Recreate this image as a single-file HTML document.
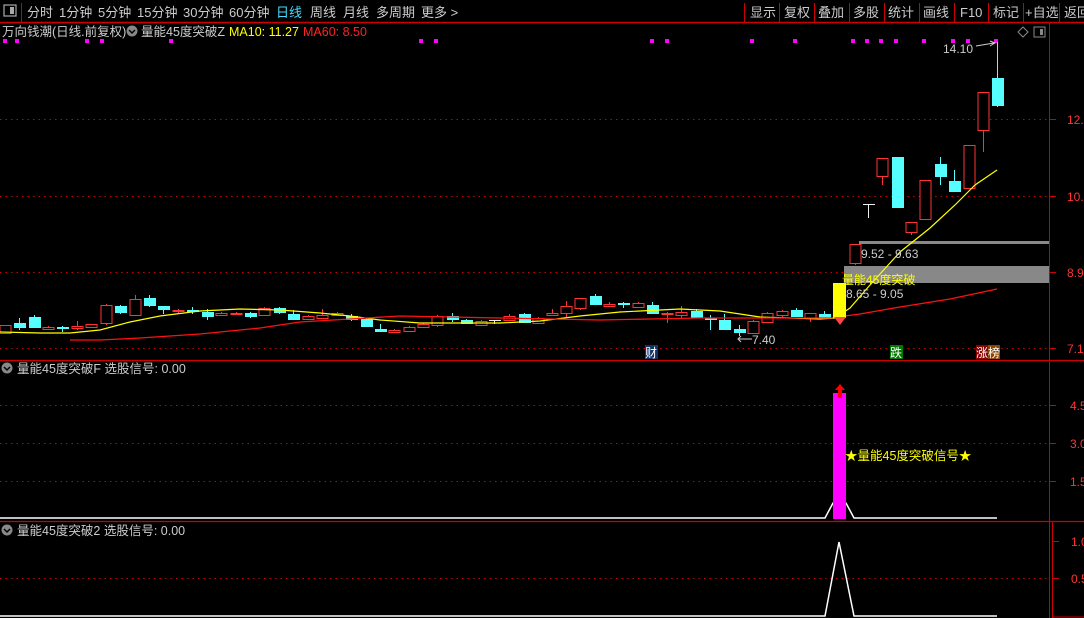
<!DOCTYPE html>
<html><head><meta charset="utf-8"><style>
body{margin:0;background:#000;width:1084px;height:618px;overflow:hidden;font-family:"Liberation Sans","Noto Sans CJK SC",sans-serif}
svg{position:absolute;left:0;top:0}
text{font-family:"Liberation Sans","Noto Sans CJK SC",sans-serif}
</style></head><body>
<svg id="s" width="1084" height="618" viewBox="0 0 1084 618" xmlns="http://www.w3.org/2000/svg">
<rect width="1084" height="618" fill="#000"/>
<!-- top bar -->
<line x1="0" y1="22.5" x2="1084" y2="22.5" stroke="#c00" stroke-width="1.5"/>
<rect x="4" y="5" width="12" height="11" fill="none" stroke="#aaa" stroke-width="1.2"/><rect x="10" y="7" width="4" height="7" fill="#aaa"/>
<line x1="21.5" y1="3" x2="21.5" y2="22" stroke="#c00"/>
<g font-size="13" fill="#ccc">
<text x="27" y="17">分时</text><text x="59" y="17">1分钟</text><text x="98" y="17">5分钟</text><text x="137" y="17">15分钟</text><text x="183" y="17">30分钟</text><text x="229" y="17">60分钟</text>
<text x="276" y="17" fill="#4df">日线</text><text x="310" y="17">周线</text><text x="343" y="17">月线</text><text x="376" y="17">多周期</text><text x="421" y="17">更多 &gt;</text>
<text x="750" y="17">显示</text><text x="784" y="17">复权</text><text x="818" y="17">叠加</text><text x="853" y="17">多股</text><text x="888" y="17">统计</text><text x="923" y="17">画线</text><text x="960" y="17">F10</text><text x="993" y="17">标记</text><text x="1025" y="17">+自选</text><text x="1064" y="17">返回</text>
</g>
<g stroke="#c00"><line x1="744.5" y1="3" x2="744.5" y2="22"/><line x1="779.5" y1="3" x2="779.5" y2="22"/><line x1="814.5" y1="3" x2="814.5" y2="22"/><line x1="849.5" y1="3" x2="849.5" y2="22"/><line x1="884.5" y1="3" x2="884.5" y2="22"/><line x1="919.5" y1="3" x2="919.5" y2="22"/><line x1="954.5" y1="3" x2="954.5" y2="22"/><line x1="988.5" y1="3" x2="988.5" y2="22"/><line x1="1023.5" y1="3" x2="1023.5" y2="22"/><line x1="1059.5" y1="3" x2="1059.5" y2="22"/></g>
<!-- header main -->
<g font-size="12.5">
<text x="2" y="36" fill="#ccc">万向钱潮(日线.前复权)</text>
<circle cx="132" cy="31" r="5.5" fill="#888"/><path d="M129 30 L132 33 L135 30" stroke="#000" stroke-width="1.5" fill="none"/>
<text x="141" y="36" fill="#ccc">量能45度突破Z</text>
<text x="229" y="36" fill="#ff0">MA10: 11.27</text>
<text x="303" y="36" fill="#f22">MA60: 8.50</text>
</g>
<path d="M1023 27 L1028 32 L1023 37 L1018 32Z" fill="none" stroke="#888"/>
<rect x="1034" y="27" width="11" height="10" fill="none" stroke="#888"/><rect x="1040" y="29" width="3" height="6" fill="#888"/>
<!-- axes -->
<line x1="1049.5" y1="23" x2="1049.5" y2="618" stroke="#c00"/>
<line x1="0" y1="360.5" x2="1084" y2="360.5" stroke="#c00" stroke-width="1.3"/>
<line x1="0" y1="521.5" x2="1084" y2="521.5" stroke="#c00" stroke-width="1.3"/>
<line x1="1052.5" y1="522" x2="1052.5" y2="618" stroke="#c00"/>
<line x1="1052" y1="617" x2="1084" y2="617" stroke="#c00"/>
<g stroke="#c00" stroke-dasharray="1.5 4">
<line x1="0" y1="119.5" x2="1049" y2="119.5"/><line x1="0" y1="196.5" x2="1049" y2="196.5"/><line x1="0" y1="272.5" x2="1049" y2="272.5"/><line x1="0" y1="348.5" x2="1049" y2="348.5"/>
<line x1="0" y1="405.5" x2="1049" y2="405.5"/><line x1="0" y1="443.5" x2="1049" y2="443.5"/><line x1="0" y1="481.5" x2="1049" y2="481.5"/>
<line x1="0" y1="578.5" x2="1049" y2="578.5"/>
</g>
<g stroke="#c00"><line x1="1050" y1="119.5" x2="1056" y2="119.5"/><line x1="1050" y1="196.5" x2="1056" y2="196.5"/><line x1="1050" y1="272.5" x2="1056" y2="272.5"/><line x1="1050" y1="348.5" x2="1056" y2="348.5"/><line x1="1050" y1="405.5" x2="1056" y2="405.5"/><line x1="1050" y1="443.5" x2="1056" y2="443.5"/><line x1="1050" y1="481.5" x2="1056" y2="481.5"/><line x1="1053" y1="541.5" x2="1059" y2="541.5"/><line x1="1053" y1="578.5" x2="1059" y2="578.5"/></g>
<g font-size="12" fill="#f33">
<text x="1067" y="124">12.3</text><text x="1067" y="201">10.6</text><text x="1067" y="277">8.9</text><text x="1067" y="353">7.1</text>
<text x="1070" y="410">4.5</text><text x="1070" y="448">3.0</text><text x="1070" y="486">1.5</text>
<text x="1071" y="546">1.0</text><text x="1071" y="583">0.5</text>
</g>
<g id="dots" fill="#f0f"></g>
<!-- gray zones -->
<rect x="859" y="241" width="190" height="3" fill="#888"/>
<rect x="844" y="266" width="205" height="17" fill="#888"/>
<g id="c"></g>
<polyline id="ma10" fill="none" stroke="#ff0" stroke-width="1.2" points="0,332 40,333 70,333 100,330 130,322 160,316 200,311 240,309 280,310 320,313 350,316 380,320 420,323 470,323 500,323 540,321 580,316 620,312 680,309 720,311 760,317 790,318 820,319 835,318 850,308 870,285 900,252 930,228 955,205 975,185 997,170"/>
<polyline id="ma60" fill="none" stroke="#f11" stroke-width="1.3" points="70,340 100,340 140,338 200,334 260,328 300,322 350,319 400,316 500,318 600,320 650,319 700,318 800,318 830,318 860,314 900,307 950,299 997,289"/>
<rect x="833" y="283" width="13" height="35" fill="#ff0"/>
<path d="M834 317 L846 317 L840 325Z" fill="#f44"/>
<g font-size="12">
<text x="861" y="258" fill="#ccc">9.52 - 9.63</text>
<text x="842" y="284" fill="#ff0">量能45度突破</text>
<text x="846" y="298" fill="#ccc">8.65 - 9.05</text>
<text x="943" y="53" fill="#ccc">14.10</text>
<text x="752" y="344" fill="#ccc">7.40</text>
</g>
<path d="M976 46 L994 43 M990 41 L995 43 L990 46" stroke="#ccc" fill="none"/>
<path d="M738 339 L752 339 M741 336 L738 339 L741 342" stroke="#ccc" fill="none"/>
<rect x="645" y="345" width="13" height="14" fill="#136"/><text x="645" y="357" font-size="12" fill="#fff">财</text>
<rect x="890" y="345" width="13" height="14" fill="#070"/><text x="890" y="357" font-size="12" fill="#fff">跌</text>
<rect x="976" y="345" width="12" height="14" fill="#800"/><rect x="988" y="345" width="12" height="14" fill="#840"/><text x="976" y="357" font-size="12" fill="#fff">涨榜</text>
<!-- panel 2 -->
<circle cx="7" cy="368" r="5.5" fill="#888"/><path d="M4 367 L7 370 L10 367" stroke="#000" stroke-width="1.5" fill="none"/>
<text x="17" y="373" font-size="12.5" fill="#ccc">量能45度突破F  选股信号: 0.00</text>
<polyline fill="none" stroke="#fff" stroke-width="1.5" points="0,518 825,518 833,503 846,503 854,518 997,518"/>
<rect x="833" y="393" width="13" height="126" fill="#f0f"/>
<path d="M840 384 L845 390 L842 390 L842 398 L838 398 L838 390 L835 390Z" fill="#f00"/>
<text x="845" y="460" font-size="12.5" fill="#ff0">★量能45度突破信号★</text>
<!-- panel 3 -->
<circle cx="7" cy="530" r="5.5" fill="#888"/><path d="M4 529 L7 532 L10 529" stroke="#000" stroke-width="1.5" fill="none"/>
<text x="17" y="535" font-size="12.5" fill="#ccc">量能45度突破2  选股信号: 0.00</text>
<polyline fill="none" stroke="#fff" stroke-width="1.5" points="0,616 825,616 839,542 854,616 997,616"/>
</svg>
<script>
var ns="http://www.w3.org/2000/svg",g=document.getElementById('c'),dg=document.getElementById('dots');
// x, top, bottom, wickTop, wickBottom, type(r=red hollow,c=cyan,w=white)
var d=[[5,325,333,325,333,'r'],[19,323,327,318,330,'c'],[34,317,327,315,328,'c'],[48,327,329,326,330,'r'],[62,327,328,326,332,'c'],[77,326,328,321,330,'r'],[91,324,327,324,328,'r'],[106,305,323,304,325,'r'],[120,306,312,305,314,'c'],[135,299,315,295,315,'r'],[149,298,305,295,307,'c'],[163,306,309,306,314,'c'],[178,310,311,309,313,'r'],[192,310,311,307,314,'c'],[207,312,316,309,320,'c'],[221,313,315,312,316,'r'],[236,313,314,312,315,'r'],[250,313,316,312,318,'c'],[264,308,315,307,316,'r'],[279,308,312,307,314,'c'],[293,314,319,310,320,'c'],[308,316,319,315,320,'r'],[322,315,318,309,318,'r'],[337,313,315,312,316,'r'],[351,316,319,314,321,'c'],[366,319,326,318,327,'c'],[380,329,331,324,332,'c'],[394,330,332,329,333,'r'],[409,327,331,326,332,'r'],[423,324,327,323,328,'r'],[437,316,325,315,327,'r'],[452,316,319,313,322,'c'],[466,320,323,319,324,'c'],[481,321,325,320,326,'r'],[494,320,321,320,324,'w'],[509,316,320,314,321,'r'],[524,314,322,313,322,'c'],[538,318,323,317,324,'r'],[552,313,315,309,316,'r'],[566,306,313,301,318,'r'],[580,298,308,298,310,'r'],[595,296,304,294,305,'c'],[609,304,306,302,307,'r'],[623,303,304,302,308,'c'],[638,303,307,302,308,'r'],[652,305,313,302,314,'c'],[667,313,314,312,323,'r'],[681,312,315,306,318,'r'],[696,311,317,309,318,'c'],[710,318,319,315,330,'c'],[724,320,329,314,330,'c'],[739,329,332,325,336,'c'],[753,321,333,320,334,'r'],[767,313,322,312,323,'r'],[782,311,315,310,317,'r'],[796,310,316,308,317,'c'],[810,313,318,313,322,'r'],[824,314,318,311,319,'c'],[855,244,263,244,265,'r'],[868,204,205,204,218,'w'],[882,158,176,158,185,'r'],[897,157,207,157,207,'c'],[911,222,232,222,235,'r'],[925,180,219,180,220,'r'],[940,164,176,157,185,'c'],[954,181,191,170,192,'c'],[969,145,188,145,189,'r'],[983,92,130,92,152,'r'],[997,78,105,42,107,'c']];
function el(t,a){var e=document.createElementNS(ns,t);for(var k in a)e.setAttribute(k,a[k]);g.appendChild(e);return e;}
d.forEach(function(c){var col=c[5]=='r'?'#f33':(c[5]=='c'?'#5ff':'#eee');var x=c[0];
el('line',{x1:x+.5,y1:c[3],x2:x+.5,y2:c[4],stroke:col});
var h=Math.max(1,c[2]-c[1]);
if(c[5]=='r')el('rect',{x:x-5,y:c[1]+.5,width:11,height:h,fill:'#000',stroke:col});
else el('rect',{x:x-5,y:c[1],width:12,height:h+(c[5]=='w'?0:1),fill:col});});
[5,17,87,102,171,421,436,652,667,752,795,853,867,881,896,924,953,968,996].forEach(function(x){var r=document.createElementNS(ns,'rect');r.setAttribute('x',x-2);r.setAttribute('y',39);r.setAttribute('width',4);r.setAttribute('height',4);dg.appendChild(r);});
</script>
</body></html>
